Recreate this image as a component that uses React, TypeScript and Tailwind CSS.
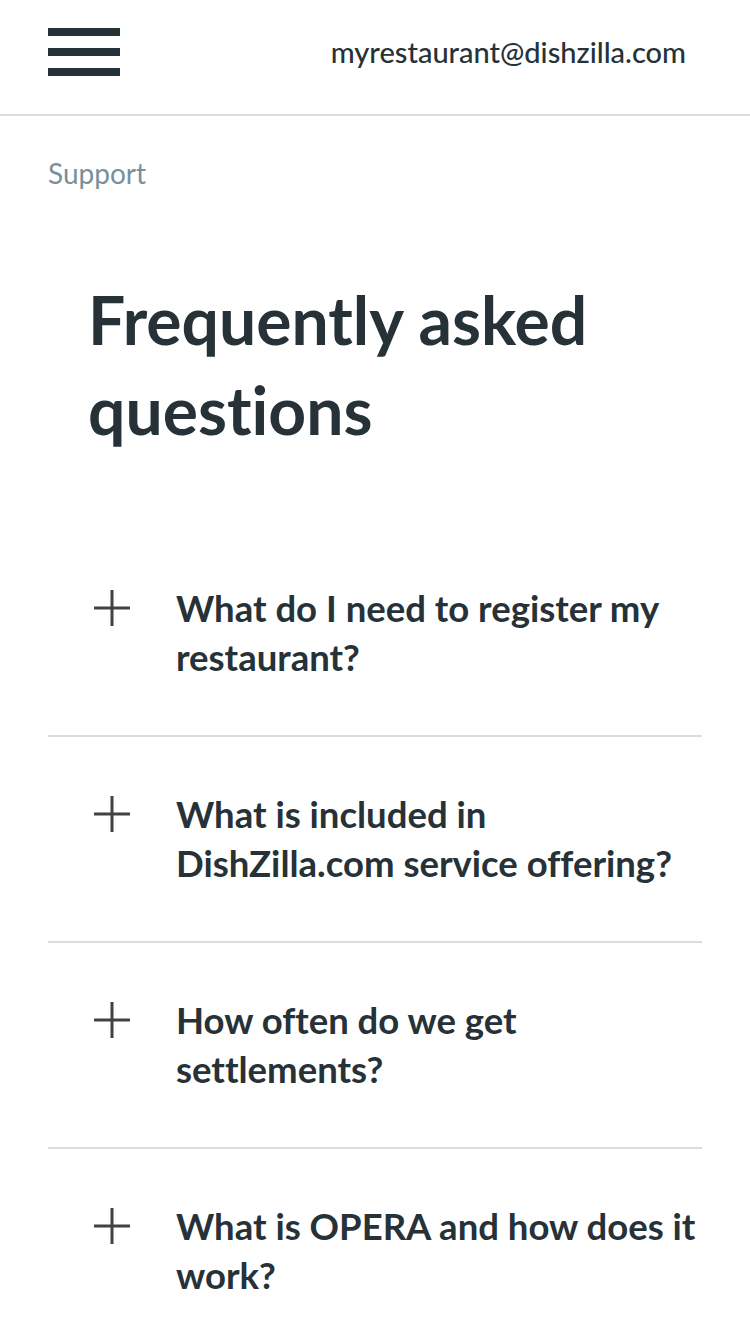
import React from "react";

const questions = [
  "What do I need to register my restaurant?",
  "What is included in DishZilla.com service offering?",
  "How often do we get settlements?",
  "What is OPERA and how does it work?",
];

function Plus() {
  return (
    <svg width="36" height="36" viewBox="0 0 36 36" className="shrink-0">
      <path d="M0 18H36M18 0V36" stroke="#424242" strokeWidth="3" />
    </svg>
  );
}

export default function App() {
  return (
    <div
      className="w-[750px] min-h-[1334px] bg-white text-[#263238] overflow-hidden [font-variant-ligatures:none]"
      style={{ fontFamily: "Lato, 'Noto Sans', sans-serif" }}
    >
      <header className="h-[116px] border-b-2 border-[#dcdcdc] flex items-start justify-between pl-12 pr-16">
        <div className="flex flex-col gap-3 pt-7">
          <div className="w-[72px] h-2 bg-[#263238]" />
          <div className="w-[72px] h-2 bg-[#263238]" />
          <div className="w-[72px] h-2 bg-[#263238]" />
        </div>
        <div className="pt-[34px] text-[29px] leading-[36px] font-medium">
          myrestaurant@dishzilla.com
        </div>
      </header>
      <div className="px-12">
        <div className="pt-[39px] text-[28px] leading-[36px] text-[#78909c]">Support</div>
        <h1 className="pl-10 pt-[84px] text-[66px] leading-[90px] font-bold">
          Frequently asked questions
        </h1>
        <div className="mt-[76px]">
          {questions.map((q, i) => (
            <div
              key={i}
              className={
                "flex items-start py-[53px] " +
                (i < questions.length - 1 ? "border-b-2 border-[#dcdcdc]" : "")
              }
            >
              <div className="pl-[46px] pt-[6px] w-[128px] shrink-0">
                <Plus />
              </div>
              <div className="text-[36.5px] leading-[49px] font-bold">{q}</div>
            </div>
          ))}
        </div>
      </div>
    </div>
  );
}
